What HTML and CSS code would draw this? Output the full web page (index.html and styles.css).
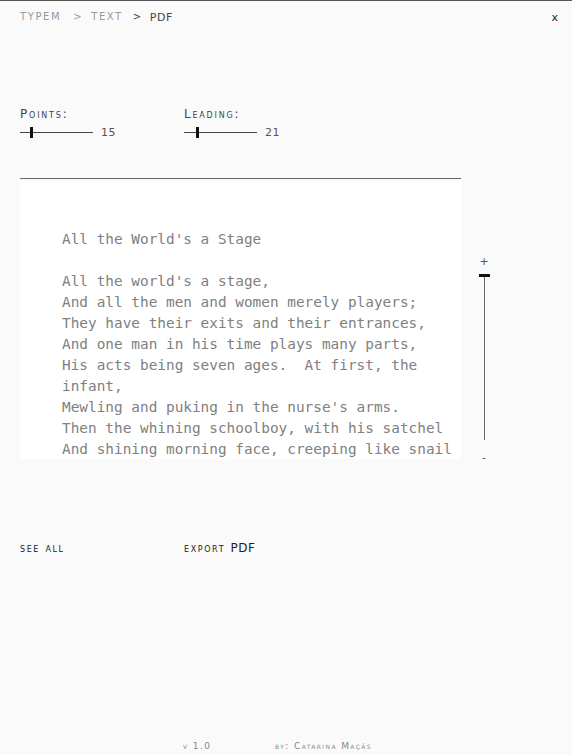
FILE: index.html
```html
<!DOCTYPE html>
<html>
<head>
<meta charset="utf-8">
<link rel="stylesheet" href="styles.css">
</head>
<body>
<div class="page">
  <header class="top">
    <nav class="crumbs">
      <span class="crumb">TYPEM</span>
      <span class="sep">&gt;</span>
      <span class="crumb">TEXT</span>
      <span class="sep cur">&gt;</span>
      <span class="crumb cur">PDF</span>
    </nav>
    <span class="close">x</span>
  </header>

  <section class="controls">
    <div class="control">
      <div class="label">Points:</div>
      <div class="slider-row">
        <div class="track"><span class="thumb" style="left:10px"></span></div>
        <span class="value">15</span>
      </div>
    </div>
    <div class="control">
      <div class="label">Leading:</div>
      <div class="slider-row">
        <div class="track"><span class="thumb" style="left:12px"></span></div>
        <span class="value">21</span>
      </div>
    </div>
  </section>

  <div class="rule"></div>

  <section class="stage">
    <div class="panel"><div class="poem">All the World's a Stage

All the world's a stage,
And all the men and women merely players;
They have their exits and their entrances,
And one man in his time plays many parts,
His acts being seven ages.  At first, the infant,
Mewling and puking in the nurse's arms.
Then the whining schoolboy, with his satchel
And shining morning face, creeping like snail</div></div>
    <div class="vslider">
      <span class="pm">+</span>
      <div class="vtrack"><span class="vthumb"></span></div>
      <span class="pm">-</span>
    </div>
  </section>

  <section class="actions">
    <span class="action">see all</span>
    <span class="action">export <span class="up">PDF</span></span>
  </section>

  <footer class="foot">
    <span class="ver">v 1.0</span>
    <span class="by">by: Catarina Maçãs</span>
  </footer>
</div>
</body>
</html>
```

FILE: styles.css
```css
html, body {
  margin: 0;
  padding: 0;
  background: #fafafa;
}
.page {
  width: 572px;
  height: 755px;
  box-sizing: border-box;
  border-top: 1px solid #555;
  font-family: "DejaVu Sans", sans-serif;
  color: #222;
  position: relative;
}
.top {
  display: flex;
  justify-content: space-between;
  align-items: center;
  height: 33px;
  padding: 0 14px 0 20px;
  font-size: 10px;
  letter-spacing: 1.6px;
}
.crumbs {
  display: flex;
}
.crumb { color: #999; }
.sep { color: #999; margin: 0 8px 0 12px; }
.sep.cur, .crumb.cur { color: #444; }
.sep.cur { margin: 0 7px 0 10px; }
.crumb.cur { font-size: 11px; letter-spacing: 0.5px; }
.close {
  color: #222;
  font-size: 11px;
  letter-spacing: 0;
}
.controls {
  display: grid;
  grid-template-columns: 164px 164px;
  padding: 73px 0 0 20px;
}
.label {
  font-variant: small-caps;
  font-size: 12px;
  letter-spacing: 1.8px;
  color: #444;
  line-height: 14px;
}
.slider-row {
  display: flex;
  align-items: center;
  margin-top: 4px;
  height: 14px;
}
.track {
  position: relative;
  width: 73px;
  height: 1px;
  background: #444;
}
.thumb {
  position: absolute;
  top: -5px;
  width: 3px;
  height: 11px;
  background: #111;
}
.value {
  margin-left: 8px;
  font-size: 11px;
  letter-spacing: 0.5px;
  color: #555;
}
.rule {
  margin: 39px 0 0 20px;
  width: 441px;
  height: 1px;
  background: #666;
}
.stage {
  display: flex;
  margin-top: 2px;
  padding-left: 20px;
}
.panel {
  width: 441px;
  height: 278px;
  background: #fff;
  overflow: hidden;
  box-sizing: border-box;
  padding: 48px 0 0 42px;
}
.poem {
  width: 400px;
  white-space: pre-wrap;
  font-family: "DejaVu Sans Mono", monospace;
  font-size: 14.4px;
  line-height: 21px;
  color: #808080;
}
.vslider {
  display: flex;
  flex-direction: column;
  align-items: center;
  width: 46px;
  padding-top: 76px;
}
.pm {
  font-size: 11px;
  line-height: 10px;
  color: #555;
}
.vtrack {
  position: relative;
  width: 1px;
  height: 165px;
  margin: 8px 0 13px;
  background: #666;
}
.vthumb {
  position: absolute;
  top: -1px;
  left: -5px;
  width: 11px;
  height: 3px;
  background: #111;
}
.actions {
  display: grid;
  grid-template-columns: 164px 164px;
  padding: 78px 0 0 20px;
  font-size: 12px;
  letter-spacing: 1.6px;
  color: #222;
}
.action {
  font-variant: small-caps;
}
.up {
  font-size: 12px;
  letter-spacing: 0.5px;
}
.foot {
  position: absolute;
  left: 0;
  right: 0;
  bottom: 4px;
  display: flex;
  padding-left: 183px;
  font-size: 9px;
  letter-spacing: 1.4px;
  color: #888;
  font-variant: small-caps;
}
.ver { width: 92px; }
```
